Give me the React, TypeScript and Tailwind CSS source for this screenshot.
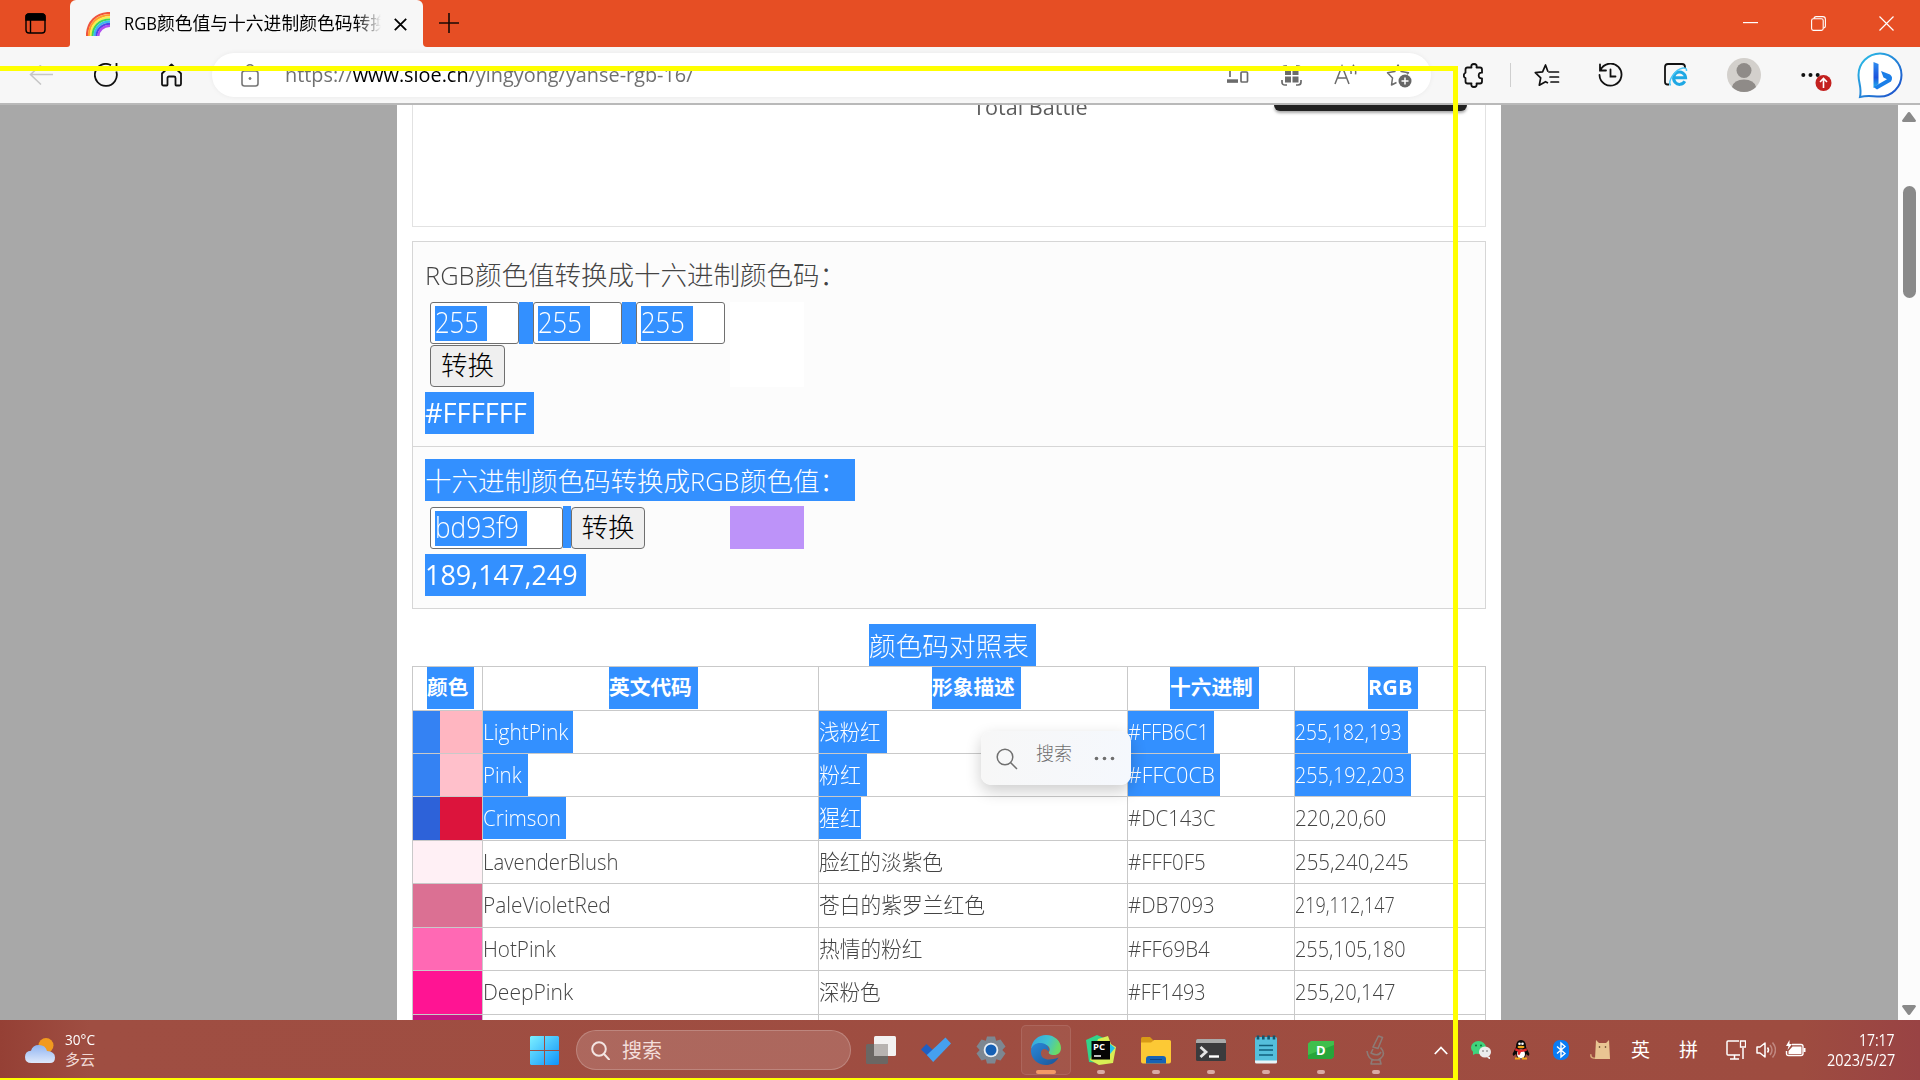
import { useLayoutEffect, useRef, useState } from "react";
import type { ReactNode } from "react";

/* Single line of text condensed or stretched to a given width. */
function Fit({ w, className = "", children }: { w: number; className?: string; children: ReactNode }) {
  const ref = useRef<HTMLSpanElement>(null);
  const [k, setK] = useState(1);
  useLayoutEffect(() => {
    if (ref.current) setK(w / ref.current.offsetWidth);
  }, [w, children]);
  return (
    <span className={"block shrink-0 whitespace-nowrap " + className} style={{ width: w }}>
      <span ref={ref} className="inline-block origin-left" style={{ transform: `scaleX(${k})` }}>
        {children}
      </span>
    </span>
  );
}

function TabStrip() {
  return (
    <div className="flex h-[47px] shrink-0 items-end bg-[#e64e24]">
      <svg className="mb-[13px] ml-[25px]" width="21" height="21" viewBox="0 0 21 21" fill="none" stroke="#000" strokeWidth="1.4">
        <rect x="1" y="1" width="19" height="19" rx="3" />
        <path d="M1 7V4q0-3 3-3h13q3 0 3 3v3z" fill="#000" />
        <path d="M5.5 7v13" />
      </svg>
      <div className="ml-[21px] h-[47px] w-[3px] bg-[#f7f7f7]">
        <div className="h-full w-full rounded-br-[4px] bg-[#e64e24]" />
      </div>
      <div className="flex h-[47px] w-[353px] rounded-t-[6px] bg-[#f7f7f7]">
        <svg className="ml-[16px] mt-[12px] shrink-0" width="24" height="24" viewBox="0 0 24 24" fill="none" strokeWidth="2.2">
          <path d="M1 24C1 10 10 1 24 1" stroke="#f0543c" />
          <path d="M3 24C3 12 11 3.2 24 3.2" stroke="#ff9d2e" />
          <path d="M4.800 24C4.800 13 12 5.300 24 5.300" stroke="#f7f04a" />
          <path d="M6.600 24C6.600 14.500 13 7.500 24 7.500" stroke="#3ed65a" />
          <path d="M8.500 24C8.500 16 14.500 9.700 24 9.700" stroke="#3bb8f0" />
          <path d="M10.500 24C10.500 17.500 16 11.800 24 11.800" stroke="#4a49e8" />
          <path d="M12.400 24C12.400 18.500 17.500 13.800 24 13.800" stroke="#b04df0" />
        </svg>
        <div className="ml-[14px] mt-[8px] flex w-[257px] overflow-hidden text-[18px] leading-[30px] text-black [mask-image:linear-gradient(to_right,#000_232px,transparent_257px)]">
          <Fit w={33}>RGB</Fit>
          <Fit w={231}>颜色值与十六进制颜色码转换</Fit>
        </div>
        <svg className="ml-[13px] mt-[18px] shrink-0" width="13" height="13" viewBox="0 0 13 13" stroke="#000" strokeWidth="1.8">
          <path d="M.8 .8l11.400 11.400M12.200 .8L.8 12.200" />
        </svg>
      </div>
      <div className="h-[47px] w-[4px] bg-[#f7f7f7]">
        <div className="h-full w-full rounded-bl-[4px] bg-[#e64e24]" />
      </div>
      <svg className="mb-[14px] ml-[12px]" width="20" height="20" viewBox="0 0 20 20" stroke="#1a0a05" strokeWidth="1.6">
        <path d="M10 0v20M0 10h20" />
      </svg>
      <div className="ml-auto mr-[26px] flex h-[47px] items-start pt-[16px]">
        <svg width="15" height="15" viewBox="0 0 15 15" stroke="#fff" strokeWidth="1.2">
          <path d="M0 6.600h15" />
        </svg>
        <svg className="ml-[53px]" width="15" height="15" viewBox="0 0 15 15" fill="none" stroke="#fff" strokeWidth="1.1">
          <rect x=".6" y="2.800" width="11.600" height="11.600" rx="1.800" />
          <path d="M3 2.700Q3 .6 5.200 .6h6.600Q14.400 .6 14.400 3.200v6.600q0 2.200-2 2.200" />
        </svg>
        <svg className="ml-[53px]" width="15" height="15" viewBox="0 0 15 15" stroke="#fff" strokeWidth="1.2">
          <path d="M.5 .5l14 14M14.500 .5l-14 14" />
        </svg>
      </div>
    </div>
  );
}

function AddressBar() {
  return (
    <div className="ml-[30px] flex h-[44px] w-[1219px] items-center rounded-full bg-white text-[#707070] shadow-[0_0_5px_rgba(0,0,0,0.06)]">
      <svg className="ml-[29px] shrink-0" width="18" height="23" viewBox="0 0 18 23" fill="none" stroke="#767676" strokeWidth="1.6">
        <rect x="1" y="7" width="16" height="15" rx="2.500" />
        <path d="M5 7V4.800a4 4 0 0 1 8 0V7" />
        <circle cx="9" cy="14.500" r="1" fill="#767676" strokeWidth="1" />
      </svg>
      <Fit w={408} className="ml-[26px] text-[20px] leading-[30px]">
        https://<span className="text-black">www.sioe.cn</span>/yingyong/yanse-rgb-16/
      </Fit>
      <svg className="ml-[533px] shrink-0" width="23" height="20" viewBox="0 0 23 20" fill="none" stroke="#6b6b6b" strokeWidth="1.7">
        <path d="M4 12V2.500h14M1 17h11" />
        <path d="M1 15.800h11" strokeWidth="3" />
        <rect x="15" y="7" width="6.500" height="10" rx="1" />
      </svg>
      <svg className="ml-[32px] shrink-0" width="21" height="21" viewBox="0 0 21 21" fill="none" stroke="#6b6b6b" strokeWidth="1.700">
        <path d="M1 6V4q0-3 3-3h2M15 1h2q3 0 3 3v2M20 15v2q0 3-3 3h-2M6 20H4q-3 0-3-3v-2" />
        <path d="M4 4h6v6h-6zM11.500 4h6v6h-6zM4 11.500h6v6h-6zM11.500 11.500h6v6h-6z" fill="#6b6b6b" stroke="none" />
      </svg>
      <svg className="ml-[32px] shrink-0" width="23" height="22" viewBox="0 0 23 22" fill="none" stroke="#6b6b6b" strokeWidth="1.500">
        <path d="M1 20L8 2l7 18M3.500 14h9M15.500 3q2 3 1.500 7M19 .8q3.500 4.500 2.500 9.500" />
      </svg>
      <svg className="ml-[29px] shrink-0" width="26" height="25" viewBox="0 0 26 25" fill="none" stroke="#6b6b6b" strokeWidth="1.500">
        <path d="M10.500 19.500L5.500 22l1-7L1.500 9.700 8.700 8.600 12 2l3.300 6.600 7.200 1.100-1.500 1.500" strokeLinejoin="round" />
        <circle cx="19" cy="18" r="6.500" fill="#666" stroke="none" />
        <path d="M19 14.500v7M15.500 18h7" stroke="#fff" />
      </svg>
    </div>
  );
}

function Toolbar() {
  return (
    <div className="flex h-[58px] shrink-0 items-start border-b-2 border-[#b9b9b9] bg-[#f7f7f7] pt-[6px]">
      <svg className="ml-[29px] mt-[12px]" width="24" height="20" viewBox="0 0 24 20" fill="none" stroke="#c6c6c6" strokeWidth="1.500">
        <path d="M24 9.500H1.500M12 0L1.500 9.500 12 19.500" />
      </svg>
      <svg className="ml-[41px] mt-[10px]" width="24" height="24" viewBox="0 0 24 24" fill="none" stroke="#111" strokeWidth="1.800">
        <path d="M22.300 8.500A11 11 0 1 1 17 2.200" />
        <path d="M15 6.500h7.500V0" />
      </svg>
      <svg className="ml-[43px] mt-[10px]" width="21" height="24" viewBox="0 0 21 24" fill="none" stroke="#111" strokeWidth="1.800" strokeLinejoin="round">
        <path d="M1 10.500L10.500 1.500 20 10.500v10.500q0 1.500-1.500 1.500h-3.300q-.7 0-.7-.8V15q0-1.500-1.500-1.500h-5q-1.500 0-1.500 1.500v6.700q0 .8-.7.8H2.500Q1 22.500 1 21z" />
      </svg>
      <AddressBar />
      <div className="flex h-[44px] items-center">
        <svg className="ml-[32px]" width="23" height="25" viewBox="0 0 23 25" fill="none" stroke="#111" strokeWidth="1.800" strokeLinejoin="round">
          <path d="M4.500 4.500h4q-.8-3.500 2.500-3.500t2.500 3.500h3.500q2 0 2 2v3.200q-3.300-.4-3.300 2.800t3.300 2.800v3.200q0 2-2 2h-3.500q.8 3.500-2.500 3.500t-2.500-3.500h-4q-2 0-2-2v-3.300Q.8 14.500.8 12.500t1.700-2.800V6.500q0-2 2-2z" />
        </svg>
        <div className="ml-[24px] h-[24px] w-px bg-[#cfcfcf]" />
        <svg className="ml-[23px]" width="26" height="24" viewBox="0 0 26 24" fill="none" stroke="#111" strokeWidth="1.700" strokeLinejoin="round">
          <path d="M14 8.800L11.500 2 8.600 8.800 1.300 9.700l5.400 5.200-1.400 7.300 6.200-3.500 2.500 1.300" />
          <path d="M15 9h9.500M16 14h8.500M17 19h7.500" strokeLinecap="round" />
        </svg>
        <svg className="ml-[38px]" width="25" height="24" viewBox="0 0 25 24" fill="none" stroke="#111" strokeWidth="1.800">
          <path d="M2.500 7A11 11 0 1 1 1.500 12M2 1.500V7.500h6M12.500 6.500v7h5" strokeLinecap="round" />
        </svg>
        <svg className="ml-[40px]" width="26" height="26" viewBox="0 0 26 26" fill="none">
          <path d="M6 22.500H4.500Q2 22.500 2 20V5q0-3 3-3h14q3 0 3 3v1" stroke="#111" strokeWidth="1.800" />
          <path d="M21.800 19.300A6 6.200 0 1 1 22.600 15.800H11.500" stroke="#1fa8e4" strokeWidth="3" />
          <path d="M7.500 23.500C4.500 19 12 7.500 20 6q4-.5 3.500 3" stroke="#49c5f5" strokeWidth="1.500" />
        </svg>
        <svg className="ml-[38px]" width="34" height="34" viewBox="0 0 34 34">
          <circle cx="17" cy="17" r="17" fill="#d3d0cc" />
          <circle cx="17" cy="12.500" r="7.500" fill="#8f8b88" />
          <path d="M5 29q2-7.500 12-7.500T29 29q-5 5-12 5T5 29z" fill="#8f8b88" />
        </svg>
        <svg className="ml-[40px]" width="32" height="34" viewBox="0 0 32 34">
          <g fill="#111">
            <circle cx="2.300" cy="17" r="2" />
            <circle cx="9.500" cy="17" r="2" />
            <circle cx="16.700" cy="17" r="2" />
          </g>
          <circle cx="22.500" cy="25" r="8" fill="#c3211f" />
          <path d="M22.500 30v-9M19 24l3.500-3.500L26 24" fill="none" stroke="#fff" strokeWidth="1.600" />
        </svg>
        <svg className="ml-[24px]" width="47" height="47" viewBox="0 0 47 47">
          <defs>
            <linearGradient id="bingRing" x1="0" y1="0" x2="1" y2="1">
              <stop offset="0" stopColor="#2cc3e8" />
              <stop offset="1" stopColor="#1c48c9" />
            </linearGradient>
            <linearGradient id="bingB" x1="0" y1="0" x2="0" y2="1">
              <stop offset="0" stopColor="#2f8df0" />
              <stop offset=".6" stopColor="#1b53dc" />
              <stop offset="1" stopColor="#22b5ee" />
            </linearGradient>
          </defs>
          <path d="M3 45C5 36 1.500 31 1.500 23A21.500 21.500 0 1 1 23 44.500C15 44.500 11 43 3 45z" fill="#fff" stroke="url(#bingRing)" strokeWidth="2" />
          <path d="M16.500 10l5 2v20l-5 4z" fill="url(#bingB)" />
          <path d="M24 19l2.500 6.500 3.500 1.800-13.500 7.700 3.500 2.500L34 29.500q2.500-4.500-1-7z" fill="#1a7ee8" />
        </svg>
      </div>
    </div>
  );
}

const field = "flex h-[42px] shrink-0 items-center rounded-[3px] border border-[#6f6f6f] bg-white pl-[4px]";
const button =
  "flex h-[42px] shrink-0 items-center justify-center rounded-[4px] border border-[#6f6f6f] bg-[#efefef] text-black";

function Field({ width, mark, text, w }: { width: string; mark: string; text: string; w: number }) {
  return (
    <div className={field + " " + width}>
      <div className={"flex h-[35px] items-center bg-[#3390ff] pb-[3px] text-[29px] leading-[32px] text-white " + mark}>
        <Fit w={w}>{text}</Fit>
      </div>
    </div>
  );
}

function Converter() {
  return (
    <div className="mt-[14px] h-[368px] shrink-0 border border-[#d6d6d6] bg-[#fcfcfc] text-[28px] font-light text-[#444]">
      <div className="relative h-[205px] border-b border-[#d6d6d6] pl-[12px] pt-[13px]">
        <div className="flex text-[26.500px] leading-[40px]">
          <Fit w={50}>RGB</Fit>
          <Fit w={371}>颜色值转换成十六进制颜色码：</Fit>
        </div>
        <div className="ml-[5px] mt-[7px] flex">
          <Field width="w-[89px]" mark="w-[52px]" text="255" w={44} />
          <div className="h-[42px] w-[14px] bg-[#3390ff]" />
          <Field width="w-[89px]" mark="w-[52px]" text="255" w={44} />
          <div className="h-[42px] w-[14px] bg-[#3390ff]" />
          <Field width="w-[89px]" mark="w-[52px]" text="255" w={44} />
        </div>
        <div className={button + " ml-[5px] mt-px w-[75px]"}>
          <Fit w={53} className="text-[26.5px]">转换</Fit>
        </div>
        <div className="mt-[5px] flex h-[42px] w-[109px] items-center bg-[#3390ff] pb-[2px] font-medium leading-[40px] text-white">
          <Fit w={102}>#FFFFFF</Fit>
        </div>
        <div className="absolute left-[317px] top-[60px] h-[85px] w-[74px] bg-white" />
      </div>
      <div className="relative pl-[12px] pt-[12px]">
        <div className="flex h-[42px] w-[430px] items-center bg-[#3390ff] pt-[2px] text-[26.500px] leading-[40px] text-white">
          <Fit w={265}>十六进制颜色码转换成</Fit>
          <Fit w={50}>RGB</Fit>
          <Fit w={106}>颜色值：</Fit>
        </div>
        <div className="ml-[5px] mt-[6px] flex">
          <Field width="w-[133px]" mark="w-[92px]" text="bd93f9" w={84} />
          <div className="-mt-px h-[42px] w-[8px] bg-[#3390ff]" />
          <div className={button + " w-[74px]"}>
            <Fit w={53} className="text-[26.5px]">转换</Fit>
          </div>
        </div>
        <div className="mt-[5px] flex h-[42px] w-[161px] items-center bg-[#3390ff] pb-[2px] font-medium leading-[40px] text-white">
          <Fit w={153}>189,147,249</Fit>
        </div>
        <div className="absolute left-[317px] top-[59px] h-[43px] w-[74px] bg-[#bd93f9]" />
      </div>
    </div>
  );
}

type Cell = { t: string; w: number; mark?: string };
type Row = { h: string; swatch: string; mark?: string; cells: Cell[] };

const rows: Row[] = [
  { h: "h-[43px]", swatch: "bg-[#ffb6c1]", mark: "bg-[#3482f3]", cells: [{ t: "LightPink", w: 85, mark: "w-[90px]" }, { t: "浅粉红", w: 62, mark: "w-[68px]" }, { t: "#FFB6C1", w: 81, mark: "w-[86px]" }, { t: "255,182,193", w: 107, mark: "w-[113px]" }] },
  { h: "h-[43px]", swatch: "bg-[#ffc0cb]", mark: "bg-[#3482f3]", cells: [{ t: "Pink", w: 39, mark: "w-[45px]" }, { t: "粉红", w: 42, mark: "w-[48px]" }, { t: "#FFC0CB", w: 87, mark: "w-[92px]" }, { t: "255,192,203", w: 110, mark: "w-[116px]" }] },
  { h: "h-[44px]", swatch: "bg-[#dc143c]", mark: "bg-[#2d62d9]", cells: [{ t: "Crimson", w: 78, mark: "w-[83px]" }, { t: "猩红", w: 42, mark: "w-[42px]" }, { t: "#DC143C", w: 88 }, { t: "220,20,60", w: 91 }] },
  { h: "h-[43px]", swatch: "bg-[#fff0f5]", cells: [{ t: "LavenderBlush", w: 136 }, { t: "脸红的淡紫色", w: 124 }, { t: "#FFF0F5", w: 78 }, { t: "255,240,245", w: 114 }] },
  { h: "h-[44px]", swatch: "bg-[#db7093]", cells: [{ t: "PaleVioletRed", w: 128 }, { t: "苍白的紫罗兰红色", w: 166 }, { t: "#DB7093", w: 87 }, { t: "219,112,147", w: 100 }] },
  { h: "h-[43px]", swatch: "bg-[#ff69b4]", cells: [{ t: "HotPink", w: 73 }, { t: "热情的粉红", w: 104 }, { t: "#FF69B4", w: 82 }, { t: "255,105,180", w: 111 }] },
  { h: "h-[44px]", swatch: "bg-[#ff1493]", cells: [{ t: "DeepPink", w: 90 }, { t: "深粉色", w: 62 }, { t: "#FF1493", w: 78 }, { t: "255,20,147", w: 100 }] },
  { h: "h-[44px]", swatch: "bg-[#c71585]", cells: [{ t: "", w: 1 }, { t: "", w: 1 }, { t: "", w: 1 }, { t: "", w: 1 }] },
];

const grid = "grid grid-cols-[70px_336px_309px_167px_191px] border-b border-[#c9c9c9]";

function ColorTable() {
  const heads = [
    { t: "颜色", w: 41, mark: "w-[47px] ml-[14px]" },
    { t: "英文代码", w: 83, mark: "w-[89px] ml-[126px]" },
    { t: "形象描述", w: 83, mark: "w-[89px] ml-[113px]" },
    { t: "十六进制", w: 83, mark: "w-[89px] ml-[42px]" },
    { t: "RGB", w: 45, mark: "w-[50px] ml-[73px]" },
  ];
  return (
    <>
      <div className="ml-[457px] mt-[15px] flex h-[42px] w-[167px] shrink-0 items-center bg-[#3390ff] pt-[2px] font-light text-white">
        <Fit w={160} className="text-[26.5px] leading-[40px]">颜色码对照表</Fit>
      </div>
      <div className="w-[1074px] shrink-0 border-l border-t border-[#c9c9c9] text-[21.500px] font-light text-[#444]">
        <div className={grid + " h-[44px]"}>
          {heads.map((h) => (
            <div key={h.t} className="border-r border-[#c9c9c9]">
              <div className={"flex h-[42px] items-center bg-[#3390ff] text-[20.700px] font-bold text-white " + h.mark}>
                <Fit w={h.w}>{h.t}</Fit>
              </div>
            </div>
          ))}
        </div>
        {rows.map((r) => (
          <div key={r.swatch} className={grid + " " + r.h}>
            <div className={"border-r border-[#c9c9c9] " + r.swatch}>{r.mark && <div className={"h-full w-[27px] " + r.mark} />}</div>
            {r.cells.map((c, i) => (
              <div key={i} className="border-r border-[#c9c9c9]">
                {c.t && (
                  <div className={"flex h-[42px] items-center " + (c.mark ? "bg-[#3390ff] text-white " + c.mark : "")}>
                    <Fit w={c.w}>{c.t}</Fit>
                  </div>
                )}
              </div>
            ))}
          </div>
        ))}
      </div>
    </>
  );
}

function Page() {
  return (
    <div className="flex min-h-0 flex-1 bg-[#a8a8a8]">
      <div className="ml-[397px] flex w-[1104px] flex-col overflow-hidden bg-white pl-[15px] pr-[15px]">
        <div className="flex h-[122px] shrink-0 border border-t-0 border-[#e2e2e2]">
          <div className="-mt-[15px] ml-[560px] h-[32px] font-normal text-[#5c5c5c]">
            <Fit w={115} className="text-[22px] leading-[32px]">Total Battle</Fit>
          </div>
          <div className="ml-[186px] h-[6px] w-[193px] rounded-b-[6px] bg-[#222] shadow-[0_2px_3px_rgba(0,0,0,0.35)]" />
        </div>
        <Converter />
        <ColorTable />
      </div>
      <div className="ml-auto flex w-[22px] flex-col items-center bg-[#fcfcfc]">
        <svg className="mt-[7px]" width="14" height="10" viewBox="0 0 14 10" fill="#8a8a8a">
          <path d="M7 0q1 0 1.500 1L14 8.500q0 1.500-1.500 1.500h-11Q0 10 0 8.500L5.500 1Q6 0 7 0z" />
        </svg>
        <div className="mt-[64px] h-[112px] w-[13px] rounded-full bg-[#8a8a8a]" />
        <svg className="mb-[5px] mt-auto" width="14" height="10" viewBox="0 0 14 10" fill="#8a8a8a">
          <path d="M7 10q1 0 1.500-1L14 1.500Q14 0 12.500 0h-11Q0 0 0 1.500L5.500 9Q6 10 7 10z" />
        </svg>
      </div>
    </div>
  );
}

function AppSlot({ children, open = true }: { children: ReactNode; open?: boolean }) {
  return (
    <div className="flex h-[60px] w-[55px] shrink-0 flex-col items-center pt-[15px]">
      {children}
      {open && <div className="mt-[5px] h-[4px] w-[8px] rounded-full bg-[#d9aaa3]" />}
    </div>
  );
}

function Apps() {
  return (
    <div className="flex">
      <AppSlot open={false}>
        <svg width="30" height="30" viewBox="0 0 30 30">
          <rect x="0" y="9" width="22" height="20" rx="1.500" fill="#6b6764" />
          <rect x="8" y="1" width="22" height="20" rx="1.500" fill="#f3f2f2" />
          <path d="M8 9h14v12H8z" fill="#b7b3b1" />
        </svg>
      </AppSlot>
      <AppSlot open={false}>
        <svg width="30" height="30" viewBox="0 0 30 30">
          <path d="M0 14.500L5.500 9l10 9.500-5 6z" fill="#1e5fc4" />
          <path d="M5.800 20L24.500 2.500 30 8.500 12.200 27z" fill="#45a0ee" />
        </svg>
      </AppSlot>
      <AppSlot open={false}>
        <svg width="30" height="30" viewBox="0 0 30 30">
          <path d="M11 1.500h8l1.200 4.300 4.300-1.300 5 7-3.200 3.500 3.200 3.500-5 7-4.300-1.300L19 28.500h-8l-1.200-4.300-4.300 1.300-5-7L3.700 15 .5 11.500l5-7 4.300 1.300z" fill="#7d8791" />
          <circle cx="15" cy="15" r="7.300" fill="#e9eef3" />
          <circle cx="15" cy="15" r="5.500" fill="#1560b4" />
        </svg>
      </AppSlot>
      <div className="my-[5px] flex h-[50px] w-[55px] flex-col items-center rounded-[5px] pt-[10px]">
        <div className="relative flex flex-col items-center">
          <div className="absolute -left-[10px] -top-[10px] h-[50px] w-[50px] rounded-[5px] border border-white/10 bg-white/5" />
          <svg width="30" height="30" viewBox="0 0 30 30">
            <defs>
              <linearGradient id="edgeTop" x1="0" y1="0" x2="1" y2=".3">
                <stop offset="0" stopColor="#2a9fe0" />
                <stop offset=".6" stopColor="#35bfd0" />
                <stop offset="1" stopColor="#62d860" />
              </linearGradient>
              <linearGradient id="edgeLow" x1="0" y1="0" x2="1" y2="1">
                <stop offset="0" stopColor="#1f83d8" />
                <stop offset="1" stopColor="#0f4c93" />
              </linearGradient>
            </defs>
            <path d="M0 14C1 5 7.500 0 15 0c9 0 15 6.500 15 13 0 4.500-3 7-7 7s-6-1.500-5-3c2-3 0-7-5-7.500C7 9 2 11 0 14z" fill="url(#edgeTop)" />
            <path d="M0 15c1-5 5.500-7.500 10-7 6 .5 9 5 7.500 8.500C14 12 9.500 14 10 19c.5 5 7 7.500 17.500 3.500C25 27.500 20 30 15 30 6.500 30-.500 23.500 0 15z" fill="url(#edgeLow)" />
          </svg>
          <div className="mt-[5px] h-[4px] w-[20px] rounded-full bg-[#f2945f]" />
        </div>
      </div>
      <AppSlot>
        <svg width="30" height="30" viewBox="0 0 30 30">
          <path d="M0 5L11 0l9 4-6 24L3 27z" fill="#32d38a" />
          <path d="M12 4l10-3 3 8 5 3-3 16-14 2-9-5z" fill="#d9ee54" />
          <path d="M23 8l6 5-5 6z" fill="#22c3ea" />
          <rect x="5.500" y="6" width="18.500" height="18.500" fill="#050505" />
          <text x="7" y="15" fill="#fff" fontSize="9.500" fontWeight="700" fontFamily="Open Sans">PC</text>
          <path d="M8 21h7" stroke="#fff" strokeWidth="1.500" />
        </svg>
      </AppSlot>
      <AppSlot>
        <svg width="30" height="30" viewBox="0 0 30 30">
          <path d="M0 3.500Q0 2 1.500 2H9l3.500 3.500L10 9H0z" fill="#d89a16" />
          <path d="M0 7.500h10L13 5h15.500Q30 5 30 6.500v20q0 2-2 2H2q-2 0-2-2z" fill="#fcc935" />
          <path d="M5 28.500V24q0-3 3-3h14q3 0 3 3v4.500z" fill="#1763b5" />
          <path d="M9 24.500h12" stroke="#0b4488" />
        </svg>
      </AppSlot>
      <AppSlot>
        <svg width="30" height="30" viewBox="0 0 30 30">
          <rect y="4" width="30" height="22" rx="1.500" fill="#3b3b3d" />
          <path d="M0 8V5.500Q0 4 1.500 4h27Q30 4 30 5.500V8z" fill="#aaa" />
          <path d="M4.500 12l5.500 5-5.500 5" fill="none" stroke="#e4e4e4" strokeWidth="2.800" />
          <path d="M13 21.500h10" stroke="#fff" strokeWidth="2.400" />
        </svg>
      </AppSlot>
      <AppSlot>
        <svg width="30" height="30" viewBox="0 0 30 30">
          <rect x="4" y="2" width="22" height="26" rx="1.500" fill="#55bfdc" />
          <path d="M4 25.500h22V27q0 1.500-1.500 1.500h-19Q4 28.500 4 27z" fill="#e8f5f8" />
          <path d="M8 10.500h14M8 15h14M8 20h14" stroke="#11607d" strokeWidth="1.700" />
          <path d="M7 .5v4M12.300 .5v4M17.600 .5v4M23 .5v4" stroke="#12566f" strokeWidth="2.600" />
        </svg>
      </AppSlot>
      <AppSlot>
        <svg width="30" height="30" viewBox="0 0 30 30">
          <path d="M2 8.500L5 6h23v15.500L25.500 24H2z" fill="#3fbf4c" />
          <path d="M2 20L28 10v11.500L25.500 24H2z" fill="#27a53a" />
          <text x="10" y="19.500" fill="#fff" fontSize="13" fontWeight="700" fontFamily="Open Sans">D</text>
        </svg>
      </AppSlot>
      <AppSlot>
        <svg width="30" height="30" viewBox="0 0 30 30" fill="none" stroke="#8d7b76" strokeWidth="1.600" strokeLinejoin="round">
          <path d="M17.500 1l4 1.500-4.500 11-5-1.500zM19.500 12.500q6 6.500 0 11L17 25M12 14l-2 4q7 4 10-1M6 16q1 8 7 9M11 25h8l1 4H10z" />
        </svg>
      </AppSlot>
    </div>
  );
}

function Taskbar() {
  return (
    <div className="flex h-[60px] shrink-0 bg-[linear-gradient(to_right,#954035,#9f4e42_90px,#9e4c40_1800px,#994344)] text-white">
      <svg className="ml-[24px] mt-[17px] shrink-0" width="32" height="28" viewBox="0 0 32 28">
        <defs>
          <linearGradient id="cloud" x1="0" y1="0" x2="0" y2="1">
            <stop offset="0" stopColor="#8fb4f2" />
            <stop offset="1" stopColor="#dfe9fb" />
          </linearGradient>
        </defs>
        <circle cx="22" cy="8.500" r="7.500" fill="#f29a1f" />
        <path d="M7.500 26q-6.500 0-6.500-6t6-6.300Q8.500 8 15 8t8 6q8 .5 8 6.500t-6 5.500z" fill="url(#cloud)" />
      </svg>
      <div className="ml-[9px] flex w-[465px] shrink-0 flex-col pt-[9px] text-[15px] leading-[20px]">
        <Fit w={30}>30°C</Fit>
        <Fit w={30} className="text-[#f0d8d4]">多云</Fit>
      </div>
      <svg className="mt-[16px] shrink-0" width="29" height="29" viewBox="0 0 29 29">
        <defs>
          <linearGradient id="win" x1="0" y1="0" x2="1" y2="1">
            <stop offset="0" stopColor="#7cf0ff" />
            <stop offset="1" stopColor="#0e93fa" />
          </linearGradient>
        </defs>
        <path d="M1 0h13v14H0V1zM15 0h13l1 1v13H15zM0 15h14v14H1l-1-1zM15 15h14v13l-1 1H15z" fill="url(#win)" />
      </svg>
      <div className="ml-[17px] mr-[2px] mt-[10px] flex h-[40px] w-[275px] shrink-0 items-center rounded-full border border-white/20 bg-white/15">
        <svg className="ml-[14px]" width="19" height="19" viewBox="0 0 19 19" fill="none" stroke="#f3e4e2" strokeWidth="2">
          <circle cx="8" cy="8" r="6.800" />
          <path d="M13 13l5 5.500" strokeLinecap="round" />
        </svg>
        <Fit w={40} className="ml-[12px] mt-[2px] text-[20px] leading-[30px] text-[#f3dedb]">搜索</Fit>
      </div>
      <Apps />
      <div className="ml-auto flex items-center">
        <svg width="14" height="9" viewBox="0 0 14 9" fill="none" stroke="#fff" strokeWidth="1.800">
          <path d="M.8 8L7 1.500 13.200 8" />
        </svg>
        <svg className="ml-[23px]" width="20" height="18" viewBox="0 0 20 18">
          <ellipse cx="7.500" cy="6.500" rx="7.500" ry="6.500" fill="#3fd47d" />
          <path d="M2 10v4l4-2z" fill="#3fd47d" />
          <circle cx="5" cy="4.500" r="1" fill="#176a3a" />
          <circle cx="10" cy="4.500" r="1" fill="#176a3a" />
          <ellipse cx="14" cy="11" rx="6" ry="5.500" fill="#ececec" />
          <path d="M15 15l4 1v3z" fill="#ececec" />
          <circle cx="12" cy="10" r=".8" fill="#666" />
          <circle cx="16" cy="10" r=".8" fill="#666" />
        </svg>
        <svg className="ml-[21px]" width="18" height="20" viewBox="0 0 18 20">
          <path d="M4 7q0-7 5-7t5 7l3.500 7-1 2-2.500-2-1.500 5h-7L4 14l-2.500 2-1-2z" fill="#0a0a0a" />
          <ellipse cx="9" cy="14" rx="4" ry="4.500" fill="#fff" />
          <ellipse cx="9" cy="7" rx="3.500" ry="1.300" fill="#f5a81c" />
          <circle cx="7.500" cy="3.800" r="1.300" fill="#fff" />
          <circle cx="10.500" cy="3.800" r="1.300" fill="#fff" />
          <path d="M3.500 8q5.500 3.500 11 0l.5 2.500q-3 1.500-6 1.500l-1.500 3-2-.5.5-3-3-1z" fill="#e5272c" />
          <path d="M3 18.500h5M10 18.500h5" stroke="#f5a81c" strokeWidth="2" />
        </svg>
        <svg className="ml-[23px]" width="16" height="20" viewBox="0 0 16 20">
          <rect width="16" height="20" rx="7" fill="#0a7cf5" />
          <path d="M4 6.500l8 7L8 17V3l4 3.500-8 7" fill="none" stroke="#fff" strokeWidth="1.400" />
        </svg>
        <svg className="ml-[21px]" width="21" height="20" viewBox="0 0 21 20">
          <path d="M6 18.300q-6 0-5-4" fill="none" stroke="#d8a978" strokeWidth="1.500" />
          <path d="M6 0l3 3h7l3-3 1 19H5z" fill="#e9c592" />
          <circle cx="9.500" cy="7" r=".8" fill="#4d2d18" />
          <circle cx="15.500" cy="7" r=".8" fill="#4d2d18" />
        </svg>
        <Fit w={19} className="ml-[20px] text-[19px] leading-[30px]">英</Fit>
        <Fit w={19} className="ml-[29px] text-[19px] leading-[30px]">拼</Fit>
        <svg className="ml-[28px]" width="20" height="20" viewBox="0 0 20 20" fill="none" stroke="#fff" strokeWidth="1.500">
          <path d="M13 1H2Q1 1 1 2v12q0 1 1 1h12M4 19h9M8.500 15v4M17 8v11" />
          <path d="M14.500 1h5v6h-5z" strokeWidth="1.300" />
        </svg>
        <svg className="ml-[10px]" width="20" height="20" viewBox="0 0 20 20" fill="none" stroke="#fff" strokeWidth="1.500">
          <path d="M1 7h3l5-4v14l-5-4H1z" strokeLinejoin="round" />
          <path d="M11.500 7.500q2 2.500 0 5" />
          <path d="M14 5q4 5 0 10M16.500 2.500q6 7.500 0 15" stroke="#c08880" />
        </svg>
        <svg className="ml-[9px]" width="21" height="20" viewBox="0 0 21 20" fill="none" stroke="#fff" strokeWidth="1.400">
          <path d="M7 4.500h9q2 0 2 2v7q0 2-2 2H3.500q-2 0-2-2V11" />
          <path d="M7.500 6.500h9v7.500H3.500V11zM4.500 0L1 6h2.500L2.500 10 7 4H4.500z" fill="#fff" stroke="none" />
          <path d="M19.500 8v4" strokeWidth="2" />
        </svg>
        <div className="ml-[21px] mr-[25px] flex w-[68px] flex-col items-end text-[15.500px] leading-[20px]">
          <Fit w={36}>17:17</Fit>
          <Fit w={68}>2023/5/27</Fit>
        </div>
      </div>
    </div>
  );
}

export default function App() {
  return (
    <div
      className="relative flex h-[1080px] w-[1920px] flex-col overflow-hidden"
      style={{ fontFamily: '"Open Sans", "Noto Sans CJK SC", sans-serif' }}
    >
      <TabStrip />
      <Toolbar />
      <Page />
      <Taskbar />
      {/* selection menu */}
      <div className="absolute left-[981px] top-[731px] flex h-[54px] w-[150px] rounded-[10px] bg-[linear-gradient(to_right,#f7f7f7,#f5f8fd)] text-[#6e6e6e] shadow-[0_6px_16px_rgba(0,0,0,0.2)]">
        <svg className="ml-[15px] mt-[17px]" width="22" height="22" viewBox="0 0 22 22" fill="none" stroke="#707070" strokeWidth="1.500">
          <circle cx="9" cy="9" r="7.800" />
          <path d="M14.500 14.500l6.500 6.500" />
        </svg>
        <Fit w={36} className="ml-[18px] mt-[9px] text-[18px] font-light leading-[27px]">搜索</Fit>
        <svg className="ml-[22px] mt-[25px]" width="22" height="5" viewBox="0 0 22 5" fill="#6e6e6e">
          <circle cx="2.500" cy="2.500" r="1.800" />
          <circle cx="10.500" cy="2.500" r="1.800" />
          <circle cx="18.500" cy="2.500" r="1.800" />
        </svg>
      </div>
      {/* capture frame */}
      <div className="pointer-events-none absolute left-0 top-[66px] h-[1014px] w-[1458px] border-b-2 border-r-[5px] border-t-[5px] border-[#ffff00]" />
    </div>
  );
}
